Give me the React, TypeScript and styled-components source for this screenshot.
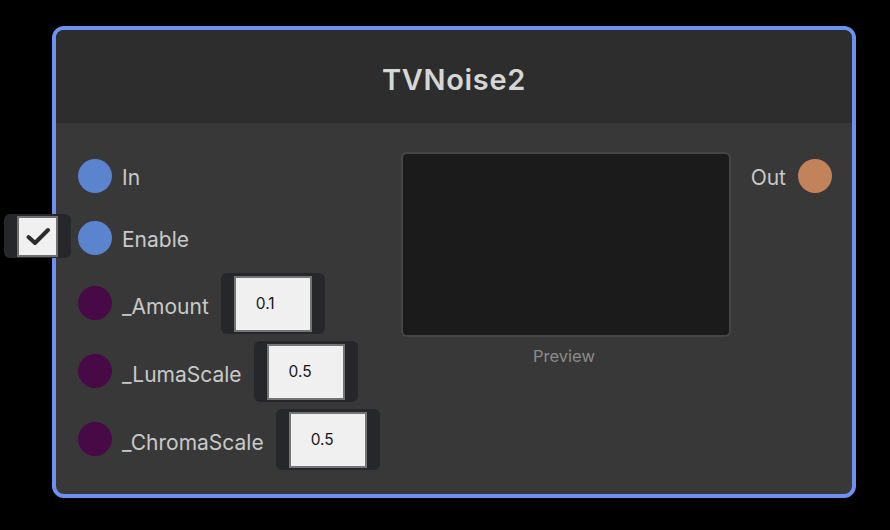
import React from "react";
import styled, { createGlobalStyle } from "styled-components";

const Global = createGlobalStyle`
  html, body { margin: 0; padding: 0; background: #000; }
  body { font-family: Inter, "Noto Sans", sans-serif; width: 890px; height: 530px; overflow: hidden; }
`;

const Stage = styled.div`
  padding: 26px 0 0 52px;
`;

const Node = styled.div`
  position: relative;
  width: 804px;
  height: 472px;
  box-sizing: border-box;
  border: 4px solid #6d91f0;
  border-radius: 12px;
  background: #383838;
  display: flex;
  flex-direction: column;
`;

const Header = styled.div`
  height: 93px;
  flex: none;
  background: #2d2d2d;
  border-radius: 8px 8px 0 0;
  display: flex;
  align-items: center;
  justify-content: center;
  color: #d6d6d6;
  font-size: 29px;
  font-weight: 600;
  letter-spacing: 0.65px;
  padding-top: 6px;
  box-sizing: border-box;
`;

const Body = styled.div`
  flex: 1;
  display: flex;
  padding: 22px 20px 0 22px;
`;

const Inputs = styled.div`
  width: 323px;
  flex: none;
  display: flex;
  flex-direction: column;
`;

const Row = styled.div<{ $h: number }>`
  position: relative;
  height: ${(p) => p.$h}px;
  display: flex;
  align-items: center;
`;

const Port = styled.div<{ $color: string }>`
  width: 34px;
  height: 34px;
  border-radius: 50%;
  background: ${(p) => p.$color};
  flex: none;
`;

const Label = styled.span<{ $drop?: number }>`
  color: #c9c9c9;
  font-size: 21px;
  margin-left: 10px;
  margin-right: 12px;
  white-space: nowrap;
  padding-top: ${(p) => (p.$drop ?? 2) * 2}px;
`;

const OutLabel = styled(Label)`
  margin-left: 0;
  margin-right: 12px;
`;

const Field = styled.div`
  background: #26272b;
  border-radius: 6px;
  padding: 3px 13px 2px 13px;
  display: flex;
`;

const FieldInput = styled.div`
  width: 78px;
  height: 56px;
  box-sizing: border-box;
  border: 2px solid #747474;
  background: #f0f0f0;
  color: #161616;
  font-size: 15.5px;
  display: flex;
  align-items: center;
  padding-left: 20px;
`;

const CheckWrap = styled.div`
  position: absolute;
  left: -74px;
  top: 7px;
  width: 67px;
  height: 44px;
  box-sizing: border-box;
  background: #26272b;
  border-radius: 6px;
  padding: 2px 13px 1px 13px;
  display: flex;
`;

const CheckBox = styled.div`
  width: 41px;
  height: 41px;
  box-sizing: border-box;
  border: 2px solid #707070;
  background: #f0f0f0;
  display: flex;
  align-items: center;
  justify-content: center;
`;

const PreviewCol = styled.div`
  width: 330px;
  flex: none;
  display: flex;
  flex-direction: column;
  align-items: center;
  padding-top: 7px;
`;

const PreviewBox = styled.div`
  width: 330px;
  height: 185px;
  box-sizing: border-box;
  background: #1b1b1b;
  border: 2px solid #464646;
  border-radius: 6px;
`;

const PreviewLabel = styled.div`
  margin-top: 9px;
  margin-right: 4px;
  color: #8c8c8c;
  font-size: 16.5px;
`;

const Outputs = styled.div`
  flex: 1;
  display: flex;
  flex-direction: column;
  align-items: flex-end;
`;

const inputs = [
  { label: "_Amount", value: "0.1" },
  { label: "_LumaScale", value: "0.5" },
  { label: "_ChromaScale", value: "0.5" },
];

export default function App() {
  return (
    <>
      <Global />
      <Stage>
        <Node>
          <Header>TVNoise2</Header>
          <Body>
            <Inputs>
              <Row $h={62}>
                <Port $color="#5b84cf" />
                <Label $drop={1}>In</Label>
              </Row>
              <Row $h={62}>
                <CheckWrap>
                  <CheckBox>
                    <svg width="26" height="20" viewBox="0 0 26 20">
                      <path
                        d="M3.5 10 L10 16 L23 3"
                        fill="none"
                        stroke="#2c2c2c"
                        strokeWidth="4"
                        strokeLinecap="round"
                        strokeLinejoin="round"
                      />
                    </svg>
                  </CheckBox>
                </CheckWrap>
                <Port $color="#5b84cf" />
                <Label $drop={1.5}>Enable</Label>
              </Row>
              {inputs.map((i) => (
                <Row $h={68} key={i.label}>
                  <Port $color="#470a47" />
                  <Label $drop={3}>{i.label}</Label>
                  <Field>
                    <FieldInput>{i.value}</FieldInput>
                  </Field>
                </Row>
              ))}
            </Inputs>
            <PreviewCol>
              <PreviewBox />
              <PreviewLabel>Preview</PreviewLabel>
            </PreviewCol>
            <Outputs>
              <Row $h={62}>
                <OutLabel $drop={1}>Out</OutLabel>
                <Port $color="#c3835a" />
              </Row>
            </Outputs>
          </Body>
        </Node>
      </Stage>
    </>
  );
}
